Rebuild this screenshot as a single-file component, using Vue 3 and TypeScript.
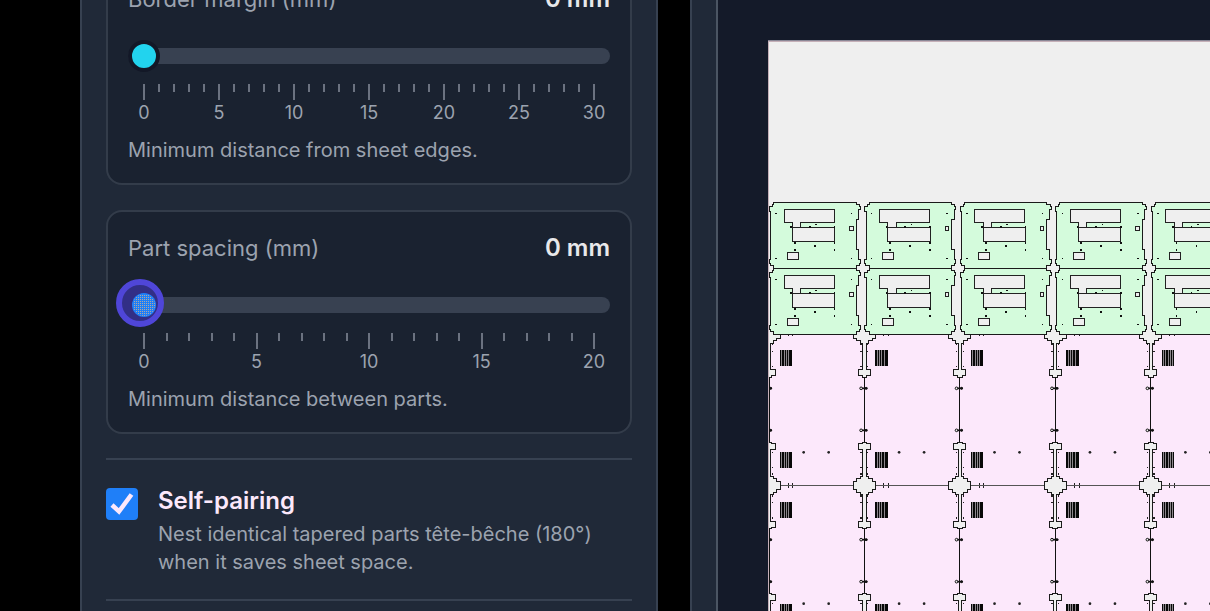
<script setup lang="ts">
import { ref } from 'vue'

interface SliderSetting {
  id: string
  label: string
  max: number
  hint: string
  pressed: boolean
}

const settings: SliderSetting[] = [
  { id: 'border-margin', label: 'Border margin (mm)', max: 30, hint: 'Minimum distance from sheet edges.', pressed: false },
  { id: 'part-spacing', label: 'Part spacing (mm)', max: 20, hint: 'Minimum distance between parts.', pressed: true },
]
const values = ref<number[]>([0, 0])
const selfPairing = ref(true)

const ticks = (max: number): number[] => Array.from({ length: max + 1 }, (_, i) => i)

// Sheet drawing: three units per screen pixel.
const columns = [0, 1, 2, 3, 4, 5]
const columnPitch = 286.3
const plateRows = [486, 684]
const plateHoles: [number, number][] = [
  [21, 35], [247, 35], [21, 170], [247, 170],
  [141, 68], [137, 133], [77, 123], [77, 144], [196, 123], [196, 144], [122, 75], [196, 76], [66, 76],
]
const panelRows = [882, 1336]
const bars = [33, 40, 47, 54, 61, 66]
</script>

<template>
  <div class="app">
    <aside class="sidebar">
      <div class="scrolled">
        <section v-for="(s, i) in settings" :key="s.id" class="card">
          <div class="head">
            <label :for="s.id">{{ s.label }}</label>
            <output :for="s.id">{{ values[i] }} mm</output>
          </div>
          <div class="slider">
            <input :id="s.id" v-model.number="values[i]" type="range" min="0" :max="s.max" />
            <svg v-if="s.pressed" class="press" viewBox="0 0 48 48" aria-hidden="true">
              <defs>
                <pattern id="grain" width="4" height="4" patternUnits="userSpaceOnUse">
                  <rect width="1" height="1" fill="#b3a8a0" />
                  <rect x="2" width="1" height="1" fill="#b3a8a0" />
                  <rect y="2" width="1" height="1" fill="#b3a8a0" />
                  <rect x="2" y="2" width="1" height="1" fill="#b3a8a0" />
                </pattern>
              </defs>
              <circle cx="24" cy="24" r="21" fill="#322f86" stroke="#4f46d8" stroke-width="6" />
              <circle cx="28" cy="26" r="12" fill="#1f7ff8" />
              <circle cx="28" cy="26" r="11" fill="url(#grain)" />
            </svg>
          </div>
          <div class="ruler" aria-hidden="true">
            <div v-for="t in ticks(s.max)" :key="t" class="tick" :class="{ major: t % 5 === 0 }">
              <i></i>
              <span v-if="t % 5 === 0">{{ t }}</span>
            </div>
          </div>
          <p class="hint">{{ s.hint }}</p>
        </section>

        <label class="option">
          <span class="box">
            <input v-model="selfPairing" type="checkbox" />
            <svg v-if="selfPairing" viewBox="0 0 32 32" aria-hidden="true">
              <path d="M6 17L13 23.500L25.500 6.500" fill="none" stroke="#fce8fb" stroke-width="4.500" />
            </svg>
          </span>
          <span class="option-text">
            <strong>Self-pairing</strong>
            <small>Nest identical tapered parts tête-bêche (180°) when it saves sheet space.</small>
          </span>
        </label>
      </div>
    </aside>

    <main class="preview">
      <div class="gutter"></div>
      <div class="stage">
        <svg class="sheet" viewBox="0 0 1800 1800" shape-rendering="crispEdges" role="img" aria-label="Nested sheet">
          <defs>
            <g id="plate">
              <path
                d="M13 0H260V7H270V14H273V23H268V53H260V143H268V172H273V184H270V190H260V198H13V190H3V184H0V173H4V27H0V13H9V7H13Z"
                fill="#d4fbdc" stroke="#1a1a1a" stroke-width="3"
              />
              <g fill="#efefef" stroke="#222" stroke-width="3">
                <path d="M44 21H194V62H94V77H69V62H44Z" />
                <rect x="69" y="77" width="127" height="42" />
                <rect x="54" y="152" width="33" height="21" />
                <rect x="241" y="72" width="10" height="12" />
              </g>
              <g fill="#111">
                <rect v-for="([x, y], n) in plateHoles" :key="n" :x="x - 3" :y="y - 3" width="5" height="5" />
              </g>
            </g>

            <g id="bars">
              <rect width="35" height="48" fill="#8c868c" />
              <rect v-for="b in bars" :key="b" :x="b - 33" width="4" height="48" fill="#080808" />
            </g>

            <g id="joint">
              <g fill="#efefef" stroke="#1b1b1b" stroke-width="3">
                <path d="M-33 0V12H-23V20H-12V28H-5V107H-18V125H-7V129H7V125H18V107H5V28H12V20H23V12H33V0" />
                <path d="M-33 454V442H-23V434H-12V426H-5V346H-18V328H-7V324H7V328H18V346H5V426H12V434H23V442H33V454" />
              </g>
              <path d="M0 129V324" stroke="#111" stroke-width="3" />
              <g fill="#222">
                <g v-for="y in [32, 52, 98, 355, 400, 420]" :key="y">
                  <rect x="-12" :y="y - 2" width="4" height="4" />
                  <rect x="8" :y="y - 2" width="4" height="4" />
                </g>
              </g>
              <g v-for="y in [163, 289]" :key="y" fill="#efefef" stroke="#111" stroke-width="3" shape-rendering="auto">
                <circle cx="-10" :cy="y" r="4" />
                <path :d="`M-7 ${y}H9`" stroke-width="5" />
                <circle cx="5" :cy="y" r="3" fill="#111" />
              </g>
            </g>

            <g id="panel">
              <rect width="286.500" height="454" fill="#fce8fb" />
              <path d="M33 0H253M33 454H253" stroke="#555" stroke-width="3" />
              <use href="#bars" x="33" y="49" />
              <use href="#bars" x="33" y="355" />
              <g fill="#222">
                <circle cx="104" cy="355" r="4" shape-rendering="auto" />
                <circle cx="179" cy="355" r="4" shape-rendering="auto" />
                <path d="M56 2h3v5h-3zM70 2h3v5h-3zM56 447h3v5h-3zM70 447h3v5h-3z" />
              </g>
            </g>
          </defs>

          <rect width="1800" height="1800" fill="#efefef" />
          <g v-for="y in panelRows" :key="`p${y}`">
            <use v-for="c in columns" :key="c" href="#panel" :x="3 + c * columnPitch" :y="y" />
          </g>
          <g v-for="y in panelRows" :key="`j${y}`">
            <use v-for="c in columns" :key="c" href="#joint" :x="3 + c * columnPitch" :y="y" />
          </g>
          <g v-for="y in plateRows" :key="`g${y}`">
            <use v-for="c in columns" :key="c" href="#plate" :x="4 + c * columnPitch" :y="y" />
          </g>
          <path d="M2 1800V3H1800" fill="none" stroke="#c5b0b8" stroke-width="4" />
          <path d="M0 1.500H1800" stroke="#8a8796" stroke-width="3" />
        </svg>
      </div>
    </main>
  </div>
</template>

<style>
body {
  margin: 0;
  background: #000;
}
</style>

<style scoped>
.app {
  display: flex;
  gap: 32px;
  height: 100vh;
  padding-left: 80px;
  overflow: hidden;
  box-sizing: border-box;
  background: #000;
  color: #9ca3af;
  font-family: Inter, "Liberation Sans", sans-serif;
}
.app * {
  box-sizing: border-box;
}
.sidebar {
  flex: 0 0 578px;
  padding: 0 24px;
  overflow: hidden;
  background: #202938;
  border: solid #374151;
  border-width: 0 2px;
}
.scrolled {
  display: flex;
  flex-direction: column;
  margin-top: -39px;
}
.card {
  margin-bottom: 25px;
  padding: 20px 20px 19px;
  background: #1a2230;
  border: 2px solid #333c4a;
  border-radius: 16px;
}
.head {
  display: flex;
  justify-content: space-between;
  font-size: 22px;
  line-height: 32px;
}
.head output {
  color: #e8e8ea;
  font-size: 24px;
  font-weight: 600;
}
.slider {
  position: relative;
  margin-top: 25px;
  height: 32px;
}
.slider input {
  display: block;
  width: 100%;
  height: 32px;
  margin: 0;
  appearance: none;
  background: transparent;
}
.slider input::-webkit-slider-runnable-track {
  height: 16px;
  border-radius: 8px;
  background: #384151;
}
.slider input::-webkit-slider-thumb {
  appearance: none;
  width: 32px;
  height: 32px;
  margin-top: -8px;
  border: 4px solid #131827;
  border-radius: 50%;
  background: #22d3ee;
}
.press {
  position: absolute;
  left: -12px;
  top: -10px;
  width: 48px;
  height: 48px;
  pointer-events: none;
}
.ruler {
  display: flex;
  justify-content: space-between;
  height: 42px;
  margin: 12px 15px 0;
}
.tick {
  display: flex;
  flex-direction: column;
  align-items: center;
  width: 2px;
  font-size: 18px;
  line-height: 26px;
  white-space: nowrap;
}
.tick i {
  flex: none;
  width: 2px;
  height: 8px;
  background: #6b7280;
}
.tick.major i {
  height: 16px;
}
.hint {
  margin: 10px 0 0;
  font-size: 20px;
  line-height: 28px;
}
.option {
  display: flex;
  gap: 20px;
  margin-top: -1px;
  padding: 24px 0 23px;
  border: solid #374151;
  border-width: 2px 0;
}
.box {
  position: relative;
  flex: none;
  width: 32px;
  height: 32px;
  margin-top: 4px;
}
.box input {
  display: block;
  width: 32px;
  height: 32px;
  margin: 0;
  appearance: none;
  border-radius: 4px;
  background: #374151;
}
.box input:checked {
  background: #1f7ff8;
}
.box svg {
  position: absolute;
  inset: 0;
}
.option-text {
  display: flex;
  flex-direction: column;
}
.option strong {
  color: #fce8fb;
  font-size: 24px;
  font-weight: 600;
  line-height: 34px;
}
.option small {
  margin-top: 2px;
  font-size: 20px;
  line-height: 28px;
}
.preview {
  display: flex;
  flex: 1;
  min-width: 0;
}
.gutter {
  flex: none;
  width: 28px;
  background: #202938;
  border: 2px solid #374151;
  border-width: 0 2px;
  border-right-color: #4b5563;
}
.stage {
  flex: 1;
  min-width: 0;
  padding: 40px 0 0 50px;
  overflow: hidden;
  background: #141a29;
}
.sheet {
  display: block;
  width: 600px;
  height: 600px;
}
</style>
